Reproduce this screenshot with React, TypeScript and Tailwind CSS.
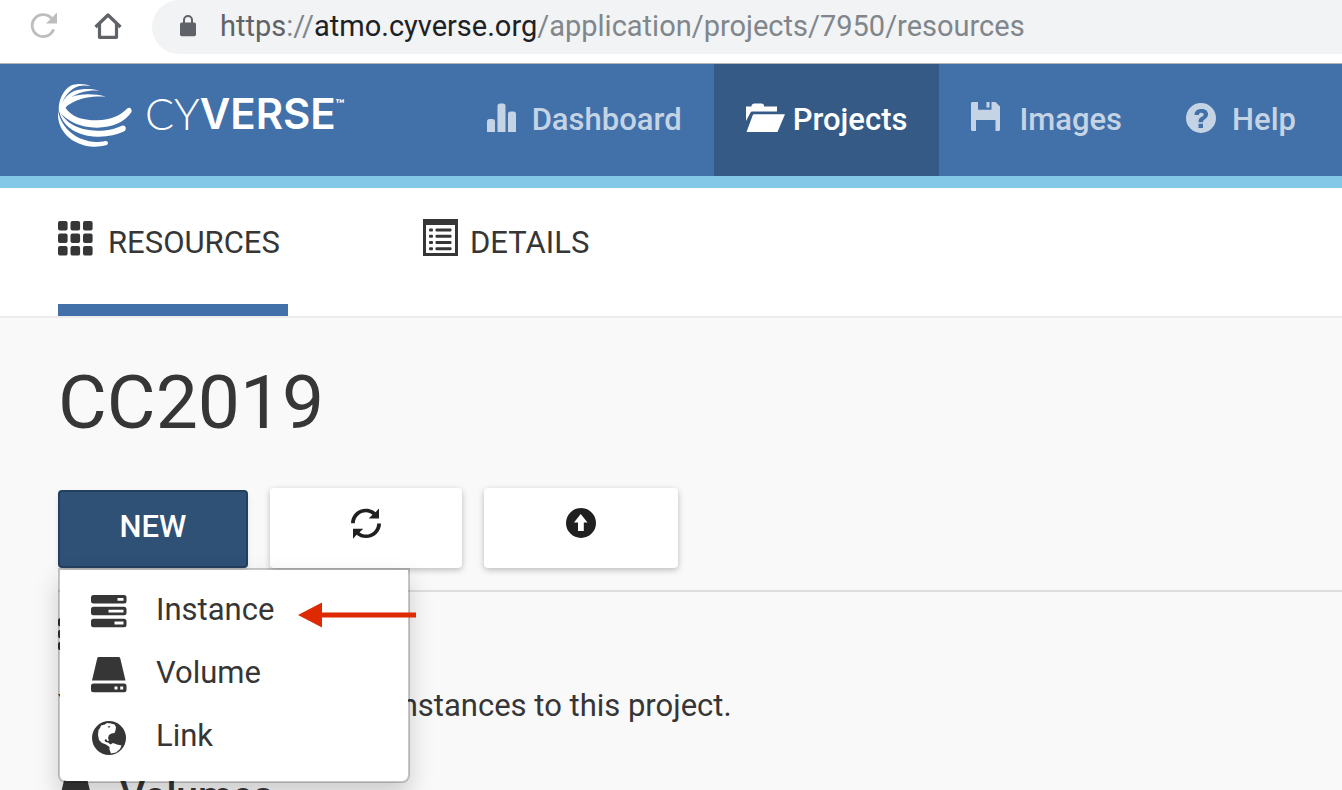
import type { ReactNode } from "react";

function ReloadIcon() {
  return (
    <svg width="28" height="28" viewBox="0 0 28 28" fill="none">
      <path d="M23.6 17.2A11 11 0 1 1 22 7" stroke="#bdbdbd" strokeWidth="2.8" />
      <path d="M27 0.500V11.500H16Z" fill="#bdbdbd" />
    </svg>
  );
}

function HomeIcon() {
  return (
    <svg width="28" height="28" viewBox="0 0 28 28" fill="none" stroke="#5f6368" strokeWidth="3.2">
      <path d="M1.500 15L14 3L26.500 15M5.500 12V25.300H22.500V12" strokeLinejoin="round" />
    </svg>
  );
}

function LockIcon() {
  return (
    <svg width="16" height="22" viewBox="0 0 16 22">
      <path d="M4 9V5a4 4 0 0 1 8 0V9" fill="none" stroke="#5f6368" strokeWidth="2" />
      <rect x="0" y="7.500" width="16" height="13.800" rx="1.800" fill="#5f6368" />
    </svg>
  );
}

function LogoMark() {
  return (
    <svg width="75" height="63" viewBox="174 251 225 189" fill="#fff">
      <path d="M272 258C254 253 234 255 218 266C198 281 188 298 184 322L176 328C176 298 190 268 212 256C232 249 256 250 272 258Z" />
      <path d="M300 271C270 268 236 274 212 292C198 303 190 314 188 325L180 328C184 302 200 282 224 271C248 264 276 264 300 271Z" />
      <path d="M318 289C280 287 246 292 222 304C206 312 198 318 197 323C214 349 246 360 290 360C334 359 362 344 381 325C389 317 398 326 394 336C376 364 338 382 290 382C240 381 202 364 176 332C182 312 192 300 214 290C242 279 284 280 318 289Z" />
      <path d="M177 328C194 368 238 390 292 391C322 391 346 385 366 376C376 373 382 386 373 393C350 404 322 410 290 409C232 407 184 378 177 328Z" />
      <path d="M174 332C186 388 232 422 288 425C298 425 308 424 316 422C325 421 327 432 318 435C300 440 276 440 260 437C208 425 170 388 174 332Z" />
    </svg>
  );
}

function StatsIcon() {
  return (
    <svg className="mb-1" width="29" height="30" viewBox="0.500 0 29 30" fill="currentColor">
      <path d="M0.500 29V18.500a2.500 2.500 0 0 1 2.500-2.500h3a2.500 2.500 0 0 1 2.500 2.500V29ZM11 29V3a2.500 2.500 0 0 1 2.500-2.500h3A2.500 2.500 0 0 1 19 3V29ZM21.500 29V11a2.500 2.500 0 0 1 2.500-2.500h3A2.500 2.500 0 0 1 29.500 11V29Z" />
    </svg>
  );
}

function FolderIcon() {
  return (
    <svg className="mb-1" width="39" height="30" viewBox="0 0 39 30" fill="currentColor">
      <path d="M0 18V3.500H5.500V3C5.500 1.500 7 0.500 8.500 0.500H15.500C17 0.500 18 1.500 18 3V3.500H31V8.500H6.500C5.500 8.500 4.800 8.900 4.400 9.800Z" />
      <path d="M8 11.200H39L31.500 29H0.500L6.800 12.100C7 11.500 7.400 11.200 8 11.200Z" />
    </svg>
  );
}

function FloppyIcon() {
  return (
    <svg className="mb-2" width="32" height="29" viewBox="0 0 32 29" fill="currentColor" fillRule="evenodd">
      <path d="M0 1.500C0 0.700 0.700 0 1.500 0H7V7.800H20.500V0H24.500L29 4.500V27.500C29 28.300 28.300 29 27.500 29H24.500V18H5V29H1.500C0.700 29 0 28.300 0 27.500ZM15.500 0H18.500V5.500H15.500Z" />
    </svg>
  );
}

function QuestionIcon() {
  return (
    <svg className="mb-1" width="30" height="30" viewBox="0 0 30 30" fill="currentColor" fillRule="evenodd">
      <path d="M15 0A15 15 0 1 1 15 30A15 15 0 0 1 15 0ZM8.500 12H13C13 10.300 13.800 9.700 15.300 9.700C17 9.700 17.700 10.400 17.700 11.500C17.700 12.700 16.800 13.200 15.300 14.100C13.400 15.200 12.500 16.500 12.500 18.700V19.300H17V18.700C17 17.700 17.700 17.100 19.200 16C20.900 14.800 22 13.400 22 11.200C22 7.700 19.300 6 15.400 6C11.100 6 8.600 8.100 8.500 12ZM12.500 20.800H17V25H12.500Z" />
    </svg>
  );
}

function GridIcon() {
  return (
    <svg className="mb-[7px]" width="35" height="35" viewBox="0 0 35 35" fill="currentColor">
      {[0, 12.5, 25].map((y) =>
        [0, 12.5, 25].map((x) => <rect key={`${x}-${y}`} x={x} y={y} width="9.600" height="9.600" rx="2" />)
      )}
    </svg>
  );
}

function ListIcon() {
  return (
    <svg className="mb-[7px]" width="35" height="37" viewBox="0 0 35 37" fill="currentColor" fillRule="evenodd">
      <path d="M0 0H35V37H0ZM3 6V34H32V6Z" />
      {[9.5, 15.7, 22, 28.2].map((y) => (
        <g key={y}>
          <rect x="6" y={y} width="4" height="3" rx="1" />
          <rect x="12.500" y={y} width="16" height="3" rx="1" />
        </g>
      ))}
    </svg>
  );
}

function RefreshIcon() {
  return (
    <svg width="30" height="31" viewBox="0 0 30 31" fill="currentColor">
      <path d="M0 15.200C0 6.800 7 0.700 15 0.700C18.800 0.700 22 2 24.500 4.300L28 0.500V10.500H17.700L21.500 6.800C19.800 5.200 17.500 4.300 15 4.300C9 4.300 4 9 3.800 15.200Z" />
      <path d="M30 15.500C30 24 23 30 15 30C11.200 30 8 28.700 5.600 26.700L2 30.700V20.800H12.300L8.500 24.200C10.200 25.700 12.500 26.600 15 26.600C21 26.600 26 22 26.200 15.500Z" />
    </svg>
  );
}

function UploadIcon() {
  return (
    <svg width="30" height="30" viewBox="0 0 30 30" fill="currentColor" fillRule="evenodd">
      <path d="M15 0A15 15 0 1 1 15 30A15 15 0 0 1 15 0ZM14.700 6L8 14.500H12V23H17.800V14.500H21.500Z" />
    </svg>
  );
}

function ServersIcon() {
  return (
    <svg width="36" height="33" viewBox="0 0 36 33" fill="currentColor" fillRule="evenodd">
      <path d="M2.500 0H33A2.500 2.500 0 0 1 35.500 2.500V6A2.500 2.500 0 0 1 33 8.500H2.500A2.500 2.500 0 0 1 0 6V2.500A2.500 2.500 0 0 1 2.500 0ZM26.500 3V5.800H32.500V3Z" />
      <path d="M2.500 11.800H33A2.500 2.500 0 0 1 35.500 14.300V17.800A2.500 2.500 0 0 1 33 20.300H2.500A2.500 2.500 0 0 1 0 17.800V14.300A2.500 2.500 0 0 1 2.500 11.800ZM17.500 14.700V17.500H32.500V14.700Z" />
      <path d="M2.500 23.700H33A2.500 2.500 0 0 1 35.500 26.200V29.700A2.500 2.500 0 0 1 33 32.200H2.500A2.500 2.500 0 0 1 0 29.700V26.200A2.500 2.500 0 0 1 2.500 23.700ZM23.500 26.500V29.400H32.500V26.500Z" />
    </svg>
  );
}

function DriveIcon() {
  return (
    <svg width="36" height="36" viewBox="0 0 36 36" fill="currentColor" fillRule="evenodd">
      <path d="M8 0H27.500C28.500 0 29.100 0.500 29.300 1.500L34.500 23.500H1L6.200 1.500C6.400 0.500 7 0 8 0Z" />
      <path d="M2.500 26.500H33A2.500 2.500 0 0 1 35.500 29V32.700A2.500 2.500 0 0 1 33 35.200H2.500A2.500 2.500 0 0 1 0 32.700V29A2.500 2.500 0 0 1 2.500 26.500ZM23.500 29.500V32.500H26.500V29.500ZM29.200 29.500V32.500H32.200V29.500Z" />
    </svg>
  );
}

function GlobeIcon() {
  return (
    <svg width="34" height="34" viewBox="0 0 34 34">
      <circle cx="17" cy="17" r="17" fill="currentColor" />
      <path
        d="M9 4.500L13 3.500L15 2L19 2.500L22.500 3.500L24 6L23.500 9.500L22.500 12L19.500 12.500L17 14L16 17L17 19.500L15.500 20L14 18L12.500 19L13.500 21L16 21.500L18.500 23.500L17.500 26L14 23.500L10 22L7 19L6 14L6.500 9L8 7Z"
        fill="#fff"
      />
      <path d="M17.500 24L21 22L25 23.500L29.500 24.500L28 28L24 31.500L19 32.500L17.500 28.500Z" fill="#fff" />
      <path d="M15.500 5.500L18.500 5L17 7Z" fill="currentColor" />
    </svg>
  );
}

function NavItem({ icon, label, active }: { icon: ReactNode; label: string; active?: boolean }) {
  return (
    <a
      href="#"
      className={
        active
          ? "flex items-center gap-2 bg-[#355a86] px-8 text-white"
          : "flex items-center gap-4 px-8 text-[#c5d4e5]"
      }
    >
      {icon}
      <span>{label}</span>
    </a>
  );
}

function MenuItem({ icon, label }: { icon: ReactNode; label: string }) {
  return (
    <li>
      <button type="button" className="flex h-[63px] w-full items-center text-left">
        <span className="flex w-24 justify-center pt-1 pl-0.5">{icon}</span>
        <span>{label}</span>
      </button>
    </li>
  );
}

function Arrow() {
  return (
    <svg width="118" height="26" viewBox="0 0 118 26" fill="#dd2a03">
      <path d="M0 13L24 0.500V10.500H118V15.500H24V25.500Z" />
    </svg>
  );
}

export default function App() {
  return (
    <div className="flex h-screen flex-col overflow-hidden bg-[#f9f9f9] font-[Roboto,sans-serif] text-[31px] leading-10 text-[#363636]">
      <div className="flex h-16 shrink-0 items-start border-b border-[#b4b4b4] bg-white pl-[30px]">
        <button type="button" aria-label="Reload" className="mt-3">
          <ReloadIcon />
        </button>
        <button type="button" aria-label="Home" className="mt-3 ml-9">
          <HomeIcon />
        </button>
        <div className="ml-[30px] flex h-[54px] flex-1 items-center gap-6 rounded-l-full bg-[#f1f3f4] pb-0.5 pl-7 text-[29px]">
          <LockIcon />
          <span className="text-[#80868b]">
            <span className="text-[#5f6368]">https</span>://<span className="text-[#202124]">atmo.cyverse.org</span>
            /application/projects/7950/resources
          </span>
        </div>
      </div>

      <header className="flex h-[124px] shrink-0 border-b-12 border-[#84c8e8] bg-[#4270a9] pr-3.5 pl-[58px]">
        <a href="#" className="mt-5 flex h-[63px] items-center gap-3 text-white">
          <LogoMark />
          <span className="flex items-start pb-1">
            <span className="font-[Lato,sans-serif] text-[43px] font-light">CY</span>
            <span className="font-[Inter,sans-serif] text-[42px] font-semibold">VERSE</span>
            <span className="font-[Lato,sans-serif] text-[12px] leading-5 font-bold">™</span>
          </span>
        </a>
        <nav className="ml-auto flex font-medium">
          <NavItem icon={<StatsIcon />} label="Dashboard" />
          <NavItem icon={<FolderIcon />} label="Projects" active />
          <NavItem icon={<FloppyIcon />} label="Images" />
          <NavItem icon={<QuestionIcon />} label="Help" />
        </nav>
      </header>

      <div className="flex h-[130px] shrink-0 gap-[135px] border-b-2 border-[#ebebeb] bg-white pl-[58px]">
        <a href="#" className="flex w-[230px] items-end gap-[15px] border-b-12 border-[#4270a9] pb-[41px]">
          <GridIcon />
          <span>RESOURCES</span>
        </a>
        <a href="#" className="flex items-end gap-3 pb-[53px]">
          <ListIcon />
          <span>DETAILS</span>
        </a>
      </div>

      <main className="pl-[58px]">
        <h1 className="mt-[39px] text-[75px] leading-[90px]">CC2019</h1>
        <div className="mt-[41px] flex items-end border-b-2 border-[#dedede] pb-[22px]">
          <div className="relative">
            <button
              type="button"
              className="h-[78px] w-[190px] rounded-sm border-2 border-[#24405f] bg-[#2f5176] pb-1 font-medium text-white shadow-md"
            >
              NEW
            </button>
            <ul className="absolute top-full left-0 z-10 h-[215px] w-[352px] rounded-b-lg border-2 border-black/20 bg-white bg-clip-padding pt-2 shadow-[0_12px_24px_rgba(0,0,0,0.18)]">
              <MenuItem icon={<ServersIcon />} label="Instance" />
              <MenuItem icon={<DriveIcon />} label="Volume" />
              <MenuItem icon={<GlobeIcon />} label="Link" />
            </ul>
            <div className="absolute top-[112px] left-60 z-20">
              <Arrow />
            </div>
          </div>
          <button
            type="button"
            aria-label="Refresh"
            className="ml-[22px] flex h-20 w-48 justify-center rounded-sm bg-white pt-5 text-[#202020] shadow-[0_2px_6px_rgba(0,0,0,0.25)]"
          >
            <RefreshIcon />
          </button>
          <button
            type="button"
            aria-label="Upload"
            className="ml-[22px] flex h-20 w-[194px] justify-center rounded-sm bg-white pt-5 text-[#202020] shadow-[0_2px_6px_rgba(0,0,0,0.25)]"
          >
            <UploadIcon />
          </button>
        </div>
        <h2 className="mt-[22px] flex items-center gap-[26px] text-[39px] font-medium">
          <ServersIcon />
          Instances
        </h2>
        <p className="mt-8 whitespace-nowrap">You have not added any instances to this project.</p>
        <h2 className="mt-[50px] flex items-center gap-[26px] text-[39px] font-medium">
          <DriveIcon />
          Volumes
        </h2>
      </main>
    </div>
  );
}
